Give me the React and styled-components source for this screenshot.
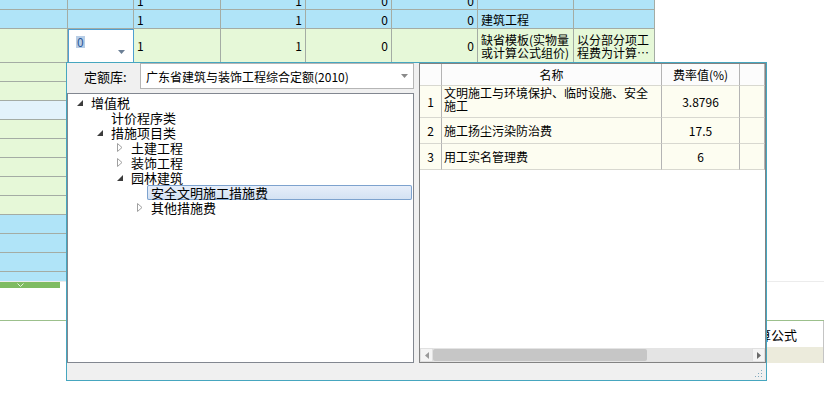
import React from "react";
import styled, { createGlobalStyle } from "styled-components";

const GlobalStyle = createGlobalStyle`
  *, *::before, *::after { box-sizing: border-box; }
  html, body { margin: 0; padding: 0; background: #fff; }
  body {
    font-family: "Noto Sans CJK SC", "Liberation Sans", sans-serif;
    font-size: 12px;
    color: #000;
  }
`;

const COLS = "68px 66px 87px 85px 86px 86px 96px 81px";

const tones = {
  blue: "#b0e4f8",
  green: "#e6f8d8",
  pale: "#e3f3fb",
};

const Page = styled.div`
  position: relative;
  width: 824px;
  height: 413px;
  overflow: hidden;
  background: #fff;
`;

const GridViewport = styled.div`
  height: 282px;
  overflow: hidden;
  border-bottom: 1px solid #ececec;
`;

const Grid = styled.div`
  width: 655px;
  margin-top: -9px;
`;

const GridRow = styled.div`
  display: grid;
  grid-template-columns: ${COLS};
  height: ${(p) => p.$h || 19}px;
  background: ${(p) => tones[p.$tone]};
`;

const Cell = styled.div`
  display: flex;
  align-items: center;
  justify-content: ${(p) => (p.$right ? "flex-end" : "flex-start")};
  padding: 0 3px;
  border-right: 1px solid #a4aca4;
  border-bottom: 1px solid #a4aca4;
  line-height: 13px;
  white-space: pre-line;
  overflow: hidden;
`;

const EditorCell = styled.div`
  display: flex;
  align-items: flex-start;
  justify-content: space-between;
  padding: 6px 8px 0 7px;
  background: #fff;
  border: 1px solid #4e9fd1;
`;

const SelText = styled.span`
  background: #b7cde6;
  color: #2b5a9a;
  line-height: 12px;
  padding: 0 1px;
`;

const Splitter = styled.div`
  height: 6px;
`;

const SplitHandle = styled.div`
  width: 60px;
  height: 6px;
  background: #7fbb62;
  display: flex;
  align-items: center;
  padding-left: 17px;
`;

const BottomPanel = styled.div`
  margin-top: 32px;
  border-top: 1px solid #9cc08c;
`;

const BottomHeader = styled.div`
  display: grid;
  grid-template-columns: 1fr 200px 82px;
  height: 26px;
`;

const BottomCell = styled.div`
  display: flex;
  align-items: center;
  padding-left: 3px;
  font-size: 13px;
  border-right: ${(p) => (p.$edge ? "1px solid #c4c4c4" : "none")};
  background: ${(p) => p.$bg || "transparent"};
`;

const BottomRow = styled(BottomHeader)`
  height: 16px;
`;

/* popup */
const Popup = styled.div`
  position: absolute;
  left: 66px;
  top: 62px;
  width: 701px;
  height: 319px;
  border: 1px solid #46a6bf;
  background: #f0f0f0;
  display: flex;
  flex-direction: column;
`;

const PopupBody = styled.div`
  display: flex;
  gap: 5px;
  height: 300px;
`;

const LeftCol = styled.div`
  width: 347px;
  display: flex;
  flex-direction: column;
`;

const LibBar = styled.div`
  display: flex;
  height: 30px;
`;

const LibLabel = styled.div`
  width: 73px;
  height: 26px;
  padding-left: 17px;
  display: flex;
  align-items: center;
  font-size: 13px;
`;

const Combo = styled.div`
  flex: 1;
  height: 26px;
  background: #fff;
  border: 1px solid #b5b5b5;
  display: flex;
  align-items: center;
  justify-content: space-between;
  padding: 0 5px 0 5px;
`;

const TreePanel = styled.div`
  flex: 1;
  background: #fff;
  border: 1px solid #828790;
  padding-top: 1px;
`;

const TreeRow = styled.div`
  display: flex;
  height: 15px;
  padding-left: ${(p) => 4 + p.$level * 20}px;
`;

const Expander = styled.div`
  width: 15px;
  display: flex;
  align-items: center;
  justify-content: center;
`;

const TreeLabel = styled.div`
  flex: ${(p) => (p.$selected ? 1 : "none")};
  margin-right: 1px;
  padding: 0 4px;
  font-size: 13px;
  line-height: 15px;
  border-radius: 2px;
  box-shadow: ${(p) => (p.$selected ? "inset 0 0 0 1px #7da2ce" : "none")};
  background: ${(p) =>
    p.$selected ? "linear-gradient(#e8effa, #d3e1f3)" : "transparent"};
`;

const TablePanel = styled.div`
  width: 347px;
  background: #fff;
  border: 1px solid #828282;
  display: flex;
  flex-direction: column;
`;

const TCOLS = "22px 220px 78px 1fr";

const THead = styled.div`
  display: grid;
  grid-template-columns: ${TCOLS};
  height: 22px;
  background: #fcfcfc;
`;

const TRow = styled.div`
  display: grid;
  grid-template-columns: ${TCOLS};
  height: ${(p) => p.$h}px;
  background: #fdfdf1;
`;

const TCell = styled.div`
  display: flex;
  align-items: ${(p) => (p.$top ? "flex-start" : "center")};
  justify-content: ${(p) => (p.$center ? "center" : "flex-start")};
  padding: 0 2px;
  line-height: 13px;
  white-space: pre-line;
  border-right: 1px solid #b4b4b4;
  border-bottom: 1px solid #d8d8d0;
`;

const TFill = styled.div`
  flex: 1;
`;

const HScroll = styled.div`
  height: 14px;
  display: flex;
  background: #e4e4e4;
`;

const ScrollBtn = styled.div`
  width: 13px;
  display: flex;
  align-items: center;
  justify-content: center;
  background: #f4f4f4;
  border: 1px solid #e0e0e0;
`;

const ScrollTrack = styled.div`
  flex: 1;
  display: flex;
  align-items: stretch;
  padding: 1px 0;
`;

const Thumb = styled.div`
  width: 214px;
  background: #c6c6c6;
  border-radius: 2px;
`;

const StatusBar = styled.div`
  flex: 1;
  display: flex;
  justify-content: flex-end;
  align-items: flex-end;
  padding: 0 3px 2px 0;
`;

const Opened = () => (
  <svg width="6" height="6" viewBox="0 0 6 6">
    <polygon points="6,0 6,6 0,6" fill="#3c3c3c" />
  </svg>
);

const Closed = () => (
  <svg width="6" height="9" viewBox="0 0 6 9">
    <polygon points="0.5,0.5 5,4.5 0.5,8.5" fill="#fff" stroke="#a0a0a0" />
  </svg>
);

const DownArrow = ({ color = "#8a8a8a" }) => (
  <svg width="7" height="4" viewBox="0 0 7 4">
    <polygon points="0,0 7,0 3.5,4" fill={color} />
  </svg>
);

const Grip = () => (
  <svg width="9" height="9" viewBox="0 0 9 9" fill="#7fa9bd">
    <rect x="7" y="1" width="1" height="1" />
    <rect x="4" y="4" width="1" height="1" />
    <rect x="7" y="4" width="1" height="1" />
    <rect x="1" y="7" width="1" height="1" />
    <rect x="4" y="7" width="1" height="1" />
    <rect x="7" y="7" width="1" height="1" />
  </svg>
);

const tree = [
  { level: 0, label: "增值税", icon: "open" },
  { level: 1, label: "计价程序类" },
  { level: 1, label: "措施项目类", icon: "open" },
  { level: 2, label: "土建工程", icon: "closed" },
  { level: 2, label: "装饰工程", icon: "closed" },
  { level: 2, label: "园林建筑", icon: "open" },
  { level: 3, label: "安全文明施工措施费", selected: true },
  { level: 3, label: "其他措施费", icon: "closed" },
];

const rates = [
  { no: "1", name: "文明施工与环境保护、临时设施、安全\n施工", rate: "3.8796", h: 32 },
  { no: "2", name: "施工扬尘污染防治费", rate: "17.5", h: 26 },
  { no: "3", name: "用工实名管理费", rate: "6", h: 26 },
];

const lowerRows = [
  "green", "green", "pale", "green", "green", "green", "green", "green",
  "blue", "blue", "blue", "blue",
];

const NumRow = ({ tone, h, note }) => (
  <GridRow $tone={tone} $h={h}>
    <Cell />
    <Cell />
    <Cell>1</Cell>
    <Cell $right>1</Cell>
    <Cell $right>0</Cell>
    <Cell $right>0</Cell>
    <Cell>{note}</Cell>
    <Cell />
  </GridRow>
);

export default function App() {
  return (
    <Page>
      <GlobalStyle />
      <GridViewport>
        <Grid>
          <NumRow tone="blue" />
          <NumRow tone="blue" note="建筑工程" />
          <GridRow $tone="green" $h={34}>
            <Cell />
            <EditorCell>
              <SelText>0</SelText>
              <div style={{ paddingTop: 4 }}>
                <DownArrow color="#6b7f95" />
              </div>
            </EditorCell>
            <Cell>1</Cell>
            <Cell $right>1</Cell>
            <Cell $right>0</Cell>
            <Cell $right>0</Cell>
            <Cell>{"缺省模板(实物量\n或计算公式组价)"}</Cell>
            <Cell>{"以分部分项工\n程费为计算…"}</Cell>
          </GridRow>
          {lowerRows.map((t, i) => (
            <GridRow key={i} $tone={t}>
              {Array.from({ length: 8 }).map((_, j) => (
                <Cell key={j} />
              ))}
            </GridRow>
          ))}
        </Grid>
      </GridViewport>
      <Splitter>
        <SplitHandle>
          <svg width="7" height="4" viewBox="0 0 7 4">
            <polyline points="0.5,0.5 3.5,3.5 6.5,0.5" fill="none" stroke="#e4f2dc" />
          </svg>
        </SplitHandle>
      </Splitter>
      <BottomPanel>
        <BottomHeader>
          <BottomCell />
          <BottomCell />
          <BottomCell $edge>计算公式</BottomCell>
        </BottomHeader>
        <BottomRow>
          <BottomCell />
          <BottomCell $bg="#ecebdc" />
          <BottomCell $edge $bg="#ecebdc" />
        </BottomRow>
      </BottomPanel>

      <Popup>
        <PopupBody>
          <LeftCol>
            <LibBar>
              <LibLabel>定额库:</LibLabel>
              <Combo>
                <span>广东省建筑与装饰工程综合定额(2010)</span>
                <DownArrow />
              </Combo>
            </LibBar>
            <TreePanel>
              {tree.map((n) => (
                <TreeRow key={n.label} $level={n.level}>
                  <Expander>
                    {n.icon === "open" && <Opened />}
                    {n.icon === "closed" && <Closed />}
                  </Expander>
                  <TreeLabel $selected={n.selected}>{n.label}</TreeLabel>
                </TreeRow>
              ))}
            </TreePanel>
          </LeftCol>
          <TablePanel>
            <THead>
              <TCell />
              <TCell $center>名称</TCell>
              <TCell $center>费率值(%)</TCell>
              <TCell />
            </THead>
            {rates.map((r) => (
              <TRow key={r.no} $h={r.h}>
                <TCell $center>{r.no}</TCell>
                <TCell $top={r.h > 30}>{r.name}</TCell>
                <TCell $center>{r.rate}</TCell>
                <TCell />
              </TRow>
            ))}
            <TFill />
            <HScroll>
              <ScrollBtn>
                <svg width="4" height="7" viewBox="0 0 4 7">
                  <polygon points="4,0 4,7 0,3.5" fill="#9a9a9a" />
                </svg>
              </ScrollBtn>
              <ScrollTrack>
                <Thumb />
              </ScrollTrack>
              <ScrollBtn>
                <svg width="4" height="7" viewBox="0 0 4 7">
                  <polygon points="0,0 0,7 4,3.5" fill="#6a6a6a" />
                </svg>
              </ScrollBtn>
            </HScroll>
          </TablePanel>
        </PopupBody>
        <StatusBar>
          <Grip />
        </StatusBar>
      </Popup>
    </Page>
  );
}
